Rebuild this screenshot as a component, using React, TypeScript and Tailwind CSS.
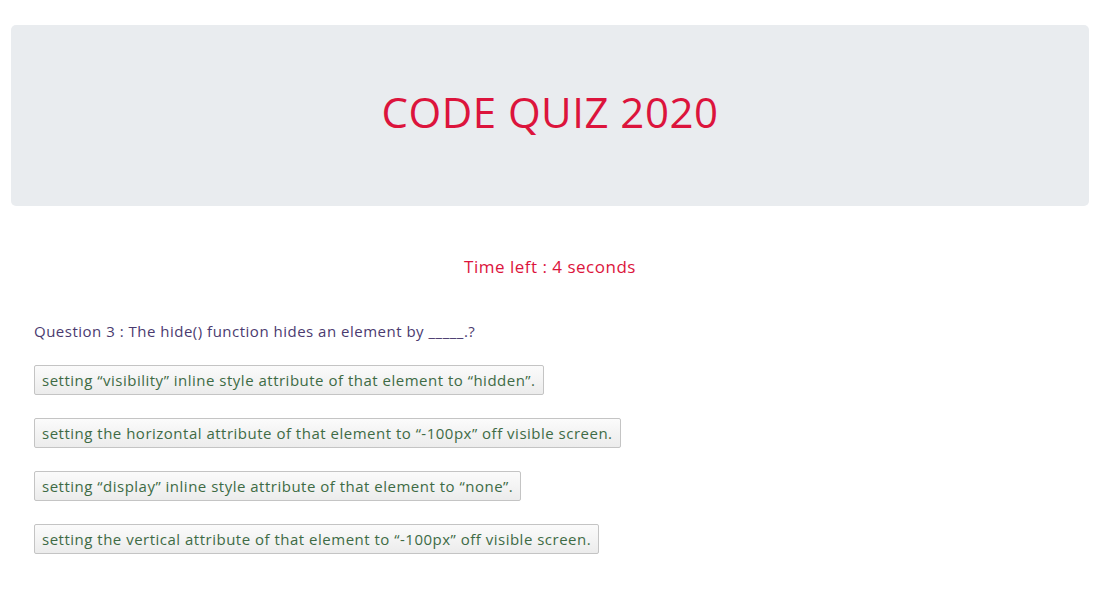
export default function App() {
  const answers = [
    "setting “visibility” inline style attribute of that element to “hidden”.",
    "setting the horizontal attribute of that element to “-100px” off visible screen.",
    "setting “display” inline style attribute of that element to “none”.",
    "setting the vertical attribute of that element to “-100px” off visible screen.",
  ];

  return (
    <div className="min-h-screen bg-white font-['Comic_Sans_MS','Open_Sans',sans-serif]">
      <div className="px-[11px] pt-[25px]">
        {/* Header */}
        <div className="h-[181px] bg-[#e9ecef] rounded-[5px] flex items-center justify-center pb-[8px]">
          <h1 className="text-[42px] tracking-[0.5px] text-[#dc143c] leading-none">CODE QUIZ 2020</h1>
        </div>
      </div>

      <p className="mt-[48px] text-center text-[17px] tracking-[0.5px] text-[#dc143c]">Time left : 4 seconds</p>

      <div className="px-[34px] mt-[40px]">
        <p className="text-[15px] tracking-[0.5px] text-[#4b3b70]">Question 3 : The hide() function hides an element by _____.?</p>
        <div className="mt-[23px] flex flex-col items-start gap-[23px]">
          {answers.map((a) => (
            <button
              key={a}
              className="h-[30px] px-[7px] border border-[#c4c4c4] bg-gradient-to-b from-[#fbfbfb] to-[#ececec] text-[15px] tracking-[0.5px] text-[#3e6b45] rounded-[2px]"
            >
              {a}
            </button>
          ))}
        </div>
      </div>
    </div>
  );
}
